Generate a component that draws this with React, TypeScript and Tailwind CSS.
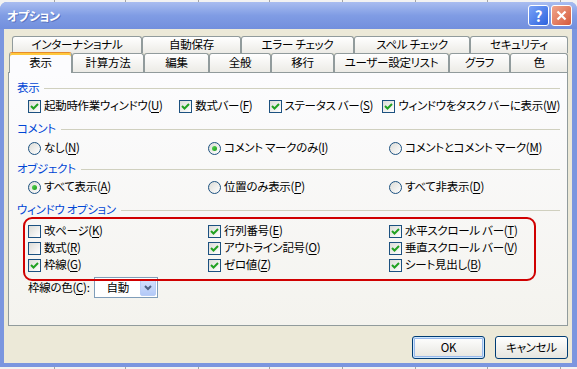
import React from "react";

const strip = ["w-[55px]", "w-[71px]", "w-[73px]", "w-[71px]", "w-[73px]", "w-[73px]", "w-[72px]", "w-[73px]"];

const backTabs = [
  ["インターナショナル", "w-[130px]"],
  ["自動保存", "w-[99px]"],
  ["エラー チェック", "w-[113px]"],
  ["スペル チェック", "w-[116px]"],
  ["セキュリティ", "w-[98px]"],
];

const frontTabs = [
  ["計算方法", "w-[72px]"],
  ["編集", "w-[65px]"],
  ["全般", "w-[62px]"],
  ["移行", "w-[63px]"],
  ["ユーザー設定リスト", "w-[115px]"],
  ["グラフ", "w-[61px]"],
  ["色", "w-[58px]"],
];

const windowOptions: [string, string, boolean][][] = [
  [
    ["改ページ", "K", false],
    ["行列番号", "E", true],
    ["水平スクロール バー", "T", true],
  ],
  [
    ["数式", "R", false],
    ["アウトライン記号", "O", true],
    ["垂直スクロール バー", "V", true],
  ],
  [
    ["枠線", "G", true],
    ["ゼロ値", "Z", true],
    ["シート見出し", "B", true],
  ],
];

function Strip() {
  return (
    <div className="flex h-[2px] bg-[#f2f2f2]">
      {strip.map((w, i) => (
        <div className={`h-full shrink-0 border-r border-[#a5a5a5] ${w}`} key={i} />
      ))}
    </div>
  );
}

function Label({ t, k, tail = "" }: { t: string; k: string; tail?: string }) {
  return (
    <span className="whitespace-nowrap">
      {t}(<span className="underline underline-offset-[2px]">{k}</span>){tail}
    </span>
  );
}

function Check({ on }: { on: boolean }) {
  return (
    <span className="flex h-[13px] w-[13px] shrink-0 items-center justify-center border border-[#1c5180] bg-linear-to-br from-[#dcdcd7] to-white">
      {on && (
        <svg height="9" viewBox="0 0 9 9" width="9">
          <path d="M1 4 L3.5 6.5 L8 2" fill="none" stroke="#21a121" strokeWidth="2" />
        </svg>
      )}
    </span>
  );
}

function Radio({ on }: { on: boolean }) {
  return (
    <span className="flex h-[13px] w-[13px] shrink-0 items-center justify-center rounded-full border border-[#1c5180] bg-linear-to-br from-[#dcdcd7] to-white">
      {on && <span className="h-[5px] w-[5px] rounded-full bg-linear-to-br from-[#55d551] to-[#1a9a1a]" />}
    </span>
  );
}

function Item({ box, t, k, on }: { box: "check" | "radio"; t: string; k: string; on: boolean }) {
  return (
    <div className="flex h-[16px] items-center gap-[3px]">
      {box === "check" ? <Check on={on} /> : <Radio on={on} />}
      <Label k={k} t={t} />
    </div>
  );
}

function Section({ title, className = "" }: { title: string; className?: string }) {
  return (
    <div className={`flex h-[16px] items-center gap-[5px] text-[#0046d5] ${className}`}>
      <span className="whitespace-nowrap">{title}</span>
      <span className="h-px flex-1 bg-[#d0d0bf]" />
    </div>
  );
}

function Tab({ label, w }: { label: string; w: string }) {
  return (
    <div
      className={`flex h-full shrink-0 items-center justify-center rounded-t-[3px] border border-b-0 border-[#919b9c] bg-linear-to-b from-white to-[#ecebe6] ${w}`}
    >
      {label}
    </div>
  );
}

function Button({ label, primary = false }: { label: string; primary?: boolean }) {
  return (
    <button
      className={`flex h-[23px] w-[73px] items-center justify-center rounded-[3px] border border-[#003c74] bg-linear-to-b from-white to-[#e6e5df] text-black ${
        primary ? "shadow-[inset_0_0_0_1px_#cee7ff,inset_0_0_0_2px_#98b8ea]" : ""
      }`}
      type="button"
    >
      {label}
    </button>
  );
}

export default function App() {
  return (
    <div className="h-[369px] w-[577px] overflow-hidden bg-[#f2f2f2] text-[11.5px] leading-none tracking-[-0.3px] text-black font-['Noto_Sans_CJK_JP','Liberation_Sans',sans-serif] [font-feature-settings:'palt']">
      <Strip />
      <div className="flex h-[365px] flex-col rounded-t-[7px] bg-[#7b96df]">
        {/* title bar */}
        <div className="flex h-[27px] shrink-0 items-center justify-between rounded-t-[7px] bg-linear-to-b from-[#a9bdf0] via-[#809ce4] to-[#728fdd] pl-[7px] pr-[5px]">
          <span className="text-[12px] font-bold text-white [text-shadow:1px_1px_0_#5a74c0]">オプション</span>
          <div className="flex gap-[2px]">
            <span className="flex h-[21px] w-[21px] items-center justify-center rounded-[3px] border border-white bg-linear-to-br from-[#7aa2f7] to-[#2d62de] text-[15px] font-bold text-white">
              ?
            </span>
            <span className="flex h-[21px] w-[21px] items-center justify-center rounded-[3px] border border-white bg-linear-to-br from-[#f0a58c] to-[#d5593a]">
              <svg height="11" viewBox="0 0 11 11" width="11">
                <path d="M1.5 1.5 L9.5 9.5 M9.5 1.5 L1.5 9.5" stroke="white" strokeWidth="2.2" />
              </svg>
            </span>
          </div>
        </div>

        {/* body */}
        <div className="flex flex-1 flex-col pb-[4px] pl-[4px] pr-[5px]">
          <div className="flex flex-1 flex-col bg-[#ece9d8] pt-[7px]">
            <div className="ml-[8px] flex h-[17px]">
              {backTabs.map(([label, w]) => (
                <Tab key={label} label={label} w={w} />
              ))}
            </div>
            <div className="relative z-10 ml-[5px] flex h-[19px] items-end">
              <div className="-mb-px flex h-[21px] w-[63px] shrink-0 items-center justify-center rounded-t-[3px] border border-b-0 border-[#919b9c] border-t-[#e68b2c] bg-[#fcfcfe] shadow-[inset_0_2px_0_#ffc83c]">
                表示
              </div>
              {frontTabs.map(([label, w]) => (
                <Tab key={label} label={label} w={w} />
              ))}
            </div>

            {/* tab page */}
            <div className="relative mx-[4px] flex h-[254px] flex-col border border-[#919b9c] bg-linear-to-b from-[#fcfcfe] to-[#f4f3ee] pl-[8px] pr-[7px] pt-[7px]">
              <Section title="表示" />
              <div className="ml-[11px] mt-[2px] flex">
                <div className="w-[154px]">
                  <Item box="check" k="U" on t="起動時作業ウィンドウ" />
                </div>
                <div className="w-[91px]">
                  <Item box="check" k="F" on t="数式バー" />
                </div>
                <div className="w-[116px]">
                  <Item box="check" k="S" on t="ステータス バー" />
                </div>
                <Item box="check" k="W" on t="ウィンドウをタスク バーに表示" />
              </div>

              <Section className="mt-[7px]" title="コメント" />
              <div className="ml-[11px] mt-[3px] grid grid-cols-[180px_181px_1fr]">
                <Item box="radio" k="N" on={false} t="なし" />
                <Item box="radio" k="I" on t="コメント マークのみ" />
                <Item box="radio" k="M" on={false} t="コメントとコメント マーク" />
              </div>

              <Section className="mt-[5px]" title="オブジェクト" />
              <div className="ml-[11px] mt-[2px] grid grid-cols-[180px_181px_1fr]">
                <Item box="radio" k="A" on t="すべて表示" />
                <Item box="radio" k="P" on={false} t="位置のみ表示" />
                <Item box="radio" k="D" on={false} t="すべて非表示" />
              </div>

              <Section className="mt-[7px]" title="ウィンドウ オプション" />
              <div className="ml-[11px] mt-[5px] flex flex-col gap-px">
                {windowOptions.map((row, i) => (
                  <div className="grid grid-cols-[180px_181px_1fr]" key={i}>
                    {row.map(([t, k, on]) => (
                      <Item box="check" k={k} key={k} on={on} t={t} />
                    ))}
                  </div>
                ))}
              </div>

              <div className="ml-[11px] mt-[4px] flex h-[21px] items-center gap-[4px]">
                <Label k="C" t="枠線の色" tail=":" />
                <div className="flex h-[21px] w-[64px] items-center justify-between border border-[#7f9db9] bg-white pl-[12px] pr-px">
                  <span>自動</span>
                  <span className="flex h-[17px] w-[16px] items-center justify-center rounded-[2px] border border-[#b9cdf6] bg-linear-to-b from-[#d4e1fd] to-[#b3c9f7]">
                    <svg height="6" viewBox="0 0 8 6" width="8">
                      <path d="M1 1 L4 4 L7 1" fill="none" stroke="#4d6185" strokeWidth="2" />
                    </svg>
                  </span>
                </div>
              </div>

              {/* annotation drawn over the window options */}
              <div className="pointer-events-none absolute left-[14px] top-[144px] h-[64px] w-[513px] rounded-[9px] border-2 border-[#d00000]" />
            </div>

            <div className="mt-[10px] flex justify-end gap-[10px] pr-[4px]">
              <Button label="OK" primary />
              <Button label="キャンセル" />
            </div>
          </div>
        </div>
      </div>
      <Strip />
    </div>
  );
}
